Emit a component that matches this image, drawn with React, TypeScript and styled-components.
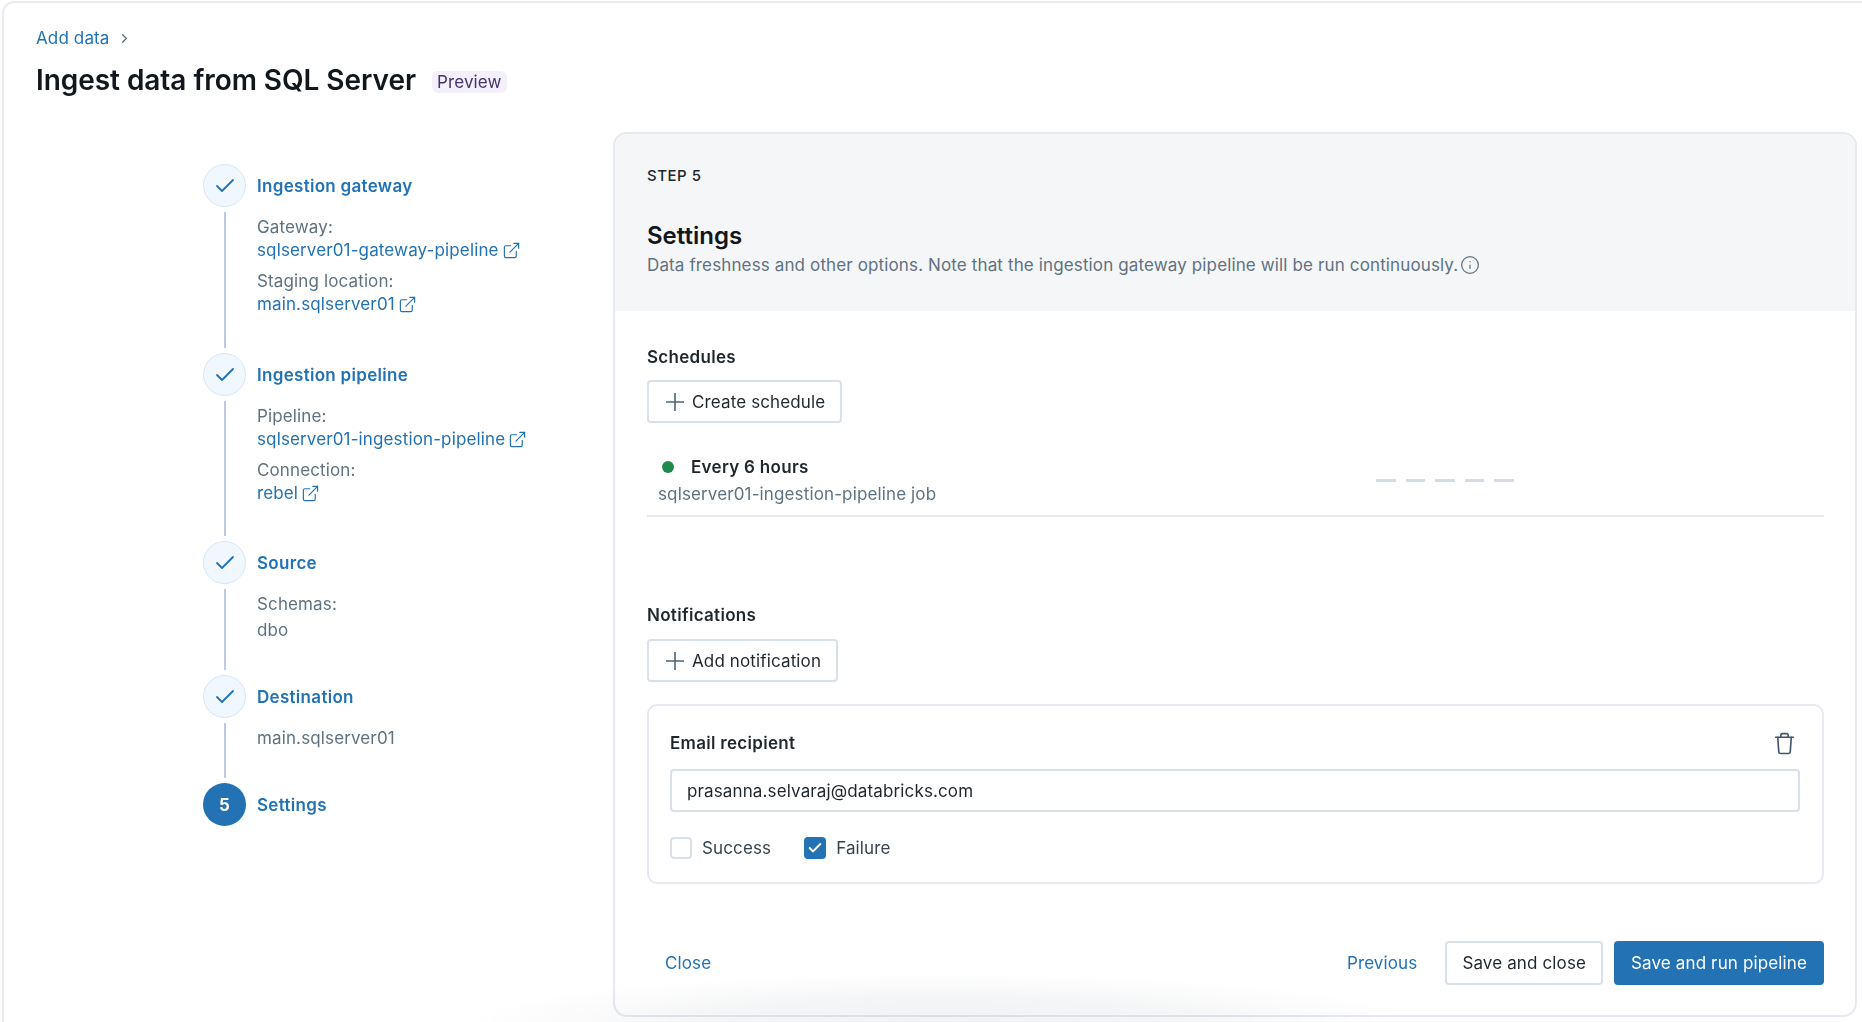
import React from 'react';
import styled, { createGlobalStyle, css } from 'styled-components';
import { Check, ChevronRight, ExternalLink, Info } from 'lucide-react';

const Global = createGlobalStyle`
  html, body { margin: 0; padding: 0; background: #fff; }
  * { box-sizing: border-box; }
  body { font-family: Inter, "Liberation Sans", sans-serif; color: #1f272d; -webkit-font-smoothing: antialiased; }
`;

const BLUE = '#2272b4';
const DIM = '#5f7281';

const bodyText = css`
  font-size: 17px;
  letter-spacing: 0.13px;
`;
const strongText = css`
  font-size: 17px;
  font-weight: 600;
  letter-spacing: 0.3px;
`;

const Frame = styled.div`
  position: relative;
  width: 1860px;
  height: 1021px;
  margin: 1px 0 0 2px;
  border: 2px solid #e8ecf0;
  border-width: 2px 0 0 2px;
  border-radius: 12px 0 0 0;
  overflow: hidden;
  background: #fff;
  filter: blur(0.6px);
`;
const Header = styled.header`
  height: 129px;
  padding: 23px 0 0 32px;
`;
const Crumb = styled.nav`
  display: flex;
  align-items: center;
  gap: 7px;
  height: 24px;
  ${bodyText};
  color: ${BLUE};
  svg { color: ${DIM}; }
`;
const TitleRow = styled.div`
  display: flex;
  align-items: center;
  gap: 16px;
  height: 36px;
  margin-top: 12px;
`;
const Title = styled.h1`
  margin: 0;
  font-size: 28px;
  font-weight: 600;
  line-height: 36px;
  letter-spacing: -0.05px;
  color: #11171c;
`;
const Badge = styled.span`
  display: inline-flex;
  align-items: center;
  height: 22px;
  margin-top: 4px;
  padding: 0 5px;
  border-radius: 6px;
  background: #f4f0fb;
  color: #44336f;
  ${bodyText};
`;
const Body = styled.main`
  display: flex;
`;
const Stepper = styled.ol`
  flex: 0 0 609px;
  margin: 0;
  padding: 32px 0 0 199px;
  list-style: none;
`;
const Step = styled.li<{ $h?: number }>`
  display: flex;
  gap: 11px;
  height: ${p => (p.$h ? `${p.$h}px` : 'auto')};
`;
const Rail = styled.div`
  display: flex;
  flex-direction: column;
  align-items: center;
  width: 43px;
`;
const Circle = styled.div<{ $active?: boolean }>`
  display: flex;
  align-items: center;
  justify-content: center;
  flex: none;
  width: 43px;
  height: 43px;
  border-radius: 50%;
  border: ${p => (p.$active ? 'none' : '1.5px solid #d7e6f5')};
  background: ${p => (p.$active ? BLUE : '#f1f7fe')};
  color: ${p => (p.$active ? '#fff' : BLUE)};
  font-size: 17px;
  font-weight: 700;
`;
const RailLine = styled.div`
  flex: 1;
  width: 2px;
  margin: 5px 0;
  background: #bccae2;
`;
const StepText = styled.div`
  min-width: 0;
`;
const StepTitle = styled.div`
  display: flex;
  align-items: center;
  height: 43px;
  padding-top: 1px;
  ${strongText};
  color: ${BLUE};
`;
const Details = styled.div`
  margin-top: 8.5px;
  display: flex;
  flex-direction: column;
`;
const DetailLabel = styled.div<{ $gap?: number }>`
  height: 23.5px;
  line-height: 23.5px;
  margin-top: ${p => p.$gap ?? 0}px;
  ${bodyText};
  color: ${DIM};
  white-space: nowrap;
`;
const DetailLink = styled.a`
  display: flex;
  align-items: center;
  gap: 3px;
  height: 23.5px;
  line-height: 23.5px;
  ${bodyText};
  color: ${BLUE};
  white-space: nowrap;
`;
const Panel = styled.section`
  flex: 1;
  height: 885px;
  margin-right: 5px;
  border: 2px solid #e6e9ef;
  border-radius: 14px;
  overflow: hidden;
  background: #fff;
`;
const PanelHead = styled.div`
  height: 177px;
  padding: 32px 32px 0;
  background: #f5f6f8;
`;
const StepLabel = styled.div`
  font-size: 15px;
  font-weight: 500;
  line-height: 20px;
  letter-spacing: 0.5px;
  color: #1f272d;
`;
const PanelTitle = styled.h2`
  margin: 34px 0 0;
  font-size: 24px;
  font-weight: 600;
  line-height: 32px;
  color: #11171c;
`;
const PanelDesc = styled.p`
  display: flex;
  align-items: center;
  gap: 2px;
  margin: 2px 0 0;
  ${bodyText};
  line-height: 22px;
  color: ${DIM};
`;
const PanelBody = styled.div`
  padding: 35px 31px 0 32px;
`;
const SectionTitle = styled.h3<{ $top?: number }>`
  margin: ${p => p.$top ?? 0}px 0 0;
  ${strongText};
  line-height: 22px;
  color: #1f272d;
`;
const GhostButton = styled.button<{ $top: number }>`
  display: flex;
  align-items: center;
  gap: 8px;
  height: 43px;
  margin-top: ${p => p.$top}px;
  padding: 0 15px 0 17px;
  border: 2px solid #d9e0ea;
  border-radius: 4px;
  background: #fff;
  font: inherit;
  ${bodyText};
  color: #1f272d;
  svg { color: #4d6478; }
`;
const ScheduleRow = styled.div`
  display: flex;
  align-items: center;
  margin-top: 33px;
  padding: 0 0 10px 11px;
  border-bottom: 2px solid #e4e8ee;
`;
const ScheduleInfo = styled.div`
  flex: 0 0 718px;
`;
const ScheduleName = styled.div`
  display: flex;
  align-items: center;
  gap: 17px;
  padding-left: 4px;
  ${strongText};
  line-height: 22px;
  color: #1f272d;
`;
const Dot = styled.span`
  width: 12px;
  height: 12px;
  border-radius: 50%;
  background: #1f8a4c;
`;
const ScheduleSub = styled.div`
  margin-top: 5px;
  ${bodyText};
  line-height: 22px;
  color: ${DIM};
`;
const Dashes = styled.div`
  display: flex;
  gap: 10px;
`;
const Dash = styled.span`
  width: 19.5px;
  height: 2.5px;
  background: #d5dce6;
`;
const Card = styled.div`
  height: 180px;
  margin-top: 22px;
  padding: 26px 22px 0 21px;
  border: 2px solid #e6eaf0;
  border-radius: 10px;
`;
const CardHead = styled.div`
  display: flex;
  align-items: center;
  justify-content: space-between;
  padding-right: 3px;
  height: 22px;
  ${strongText};
  color: #1f272d;
  svg { color: #44576a; }
`;
const EmailInput = styled.div`
  display: flex;
  align-items: center;
  height: 43px;
  margin-top: 15px;
  padding: 0 15px;
  border: 2px solid #d9e0ea;
  border-radius: 4px;
  ${bodyText};
  color: #1f272d;
`;
const Checks = styled.div`
  display: flex;
  align-items: center;
  gap: 33px;
  margin-top: 25px;
`;
const CheckItem = styled.label`
  display: flex;
  align-items: center;
  gap: 10px;
  ${bodyText};
  color: #37444f;
`;
const Box = styled.span<{ $on?: boolean }>`
  display: flex;
  align-items: center;
  justify-content: center;
  width: 22px;
  height: 22px;
  border: ${p => (p.$on ? 'none' : '2px solid #d9e0ea')};
  border-radius: 4px;
  background: ${p => (p.$on ? BLUE : '#fff')};
  color: #fff;
`;
const Footer = styled.div`
  display: flex;
  align-items: center;
  justify-content: space-between;
  margin-top: 57px;
  padding-left: 18px;
`;
const TextLink = styled.a`
  ${bodyText};
  color: ${BLUE};
`;
const Actions = styled.div`
  display: flex;
  align-items: center;
  gap: 11px;
  ${TextLink} { margin-right: 17px; }
`;
const ActionButton = styled.button<{ $primary?: boolean }>`
  height: 44px;
  padding: 0 15px;
  border: 2px solid ${p => (p.$primary ? BLUE : '#d9e0ea')};
  border-radius: 4px;
  background: ${p => (p.$primary ? BLUE : '#fff')};
  color: ${p => (p.$primary ? '#fff' : '#1f272d')};
  font: inherit;
  ${bodyText};
`;
const BottomGlow = styled.div`
  position: absolute;
  left: 470px;
  right: 450px;
  bottom: 0;
  height: 50px;
  background: radial-gradient(ellipse 470px 48px at 50% 100%, rgba(120, 130, 145, 0.1) 0%, rgba(120, 130, 145, 0.08) 50%, rgba(120, 130, 145, 0) 100%);
  pointer-events: none;
`;

const PlusIcon = () => (
  <svg width="18" height="18" viewBox="0 0 18 18" fill="none" stroke="currentColor" strokeWidth="1.6" aria-hidden="true">
    <path d="M9 0v18M0 9h18" />
  </svg>
);

const TrashIcon = () => (
  <svg width="25" height="25" viewBox="0 0 24 24" fill="none" stroke="currentColor" strokeWidth="1.6" strokeLinecap="round" strokeLinejoin="round" aria-hidden="true">
    <path d="M3.5 6h17" />
    <path d="M8.5 6V4a1.5 1.5 0 0 1 1.5-1.5h4A1.5 1.5 0 0 1 15.500 4v2" />
    <path d="M5.500 6l1 14a1.800 1.800 0 0 0 1.800 1.600h7.400a1.800 1.800 0 0 0 1.800-1.600l1-14" />
  </svg>
);

const Link = ({ children }: { children: React.ReactNode }) => (
  <DetailLink>
    {children}
    <ExternalLink size={19} strokeWidth={1.5} />
  </DetailLink>
);

const Done = () => (
  <Circle>
    <Check size={24} strokeWidth={1.8} />
  </Circle>
);

export default function App() {
  return (
    <>
      <Global />
      <Frame>
        <Header>
          <Crumb>
            Add data
            <ChevronRight size={15} strokeWidth={2} />
          </Crumb>
          <TitleRow>
            <Title>Ingest data from SQL Server</Title>
            <Badge>Preview</Badge>
          </TitleRow>
        </Header>
        <Body>
          <Stepper>
            <Step $h={189}>
              <Rail>
                <Done />
                <RailLine />
              </Rail>
              <StepText>
                <StepTitle>Ingestion gateway</StepTitle>
                <Details>
                  <DetailLabel>Gateway:</DetailLabel>
                  <Link>sqlserver01-gateway-pipeline</Link>
                  <DetailLabel $gap={7}>Staging location:</DetailLabel>
                  <Link>main.sqlserver01</Link>
                </Details>
              </StepText>
            </Step>
            <Step $h={188}>
              <Rail>
                <Done />
                <RailLine />
              </Rail>
              <StepText>
                <StepTitle>Ingestion pipeline</StepTitle>
                <Details>
                  <DetailLabel>Pipeline:</DetailLabel>
                  <Link>sqlserver01-ingestion-pipeline</Link>
                  <DetailLabel $gap={7}>Connection:</DetailLabel>
                  <Link>rebel</Link>
                </Details>
              </StepText>
            </Step>
            <Step $h={134}>
              <Rail>
                <Done />
                <RailLine />
              </Rail>
              <StepText>
                <StepTitle>Source</StepTitle>
                <Details>
                  <DetailLabel>Schemas:</DetailLabel>
                  <DetailLabel $gap={3}>dbo</DetailLabel>
                </Details>
              </StepText>
            </Step>
            <Step $h={108}>
              <Rail>
                <Done />
                <RailLine />
              </Rail>
              <StepText>
                <StepTitle>Destination</StepTitle>
                <Details>
                  <DetailLabel>main.sqlserver01</DetailLabel>
                </Details>
              </StepText>
            </Step>
            <Step>
              <Rail>
                <Circle $active>5</Circle>
              </Rail>
              <StepText>
                <StepTitle>Settings</StepTitle>
              </StepText>
            </Step>
          </Stepper>
          <Panel>
            <PanelHead>
              <StepLabel>STEP 5</StepLabel>
              <PanelTitle>Settings</PanelTitle>
              <PanelDesc>
                Data freshness and other options. Note that the ingestion gateway pipeline will be run continuously.
                <Info size={20} strokeWidth={1.5} />
              </PanelDesc>
            </PanelHead>
            <PanelBody>
              <SectionTitle>Schedules</SectionTitle>
              <GhostButton $top={12}>
                <PlusIcon />
                Create schedule
              </GhostButton>
              <ScheduleRow>
                <ScheduleInfo>
                  <ScheduleName>
                    <Dot />
                    Every 6 hours
                  </ScheduleName>
                  <ScheduleSub>sqlserver01-ingestion-pipeline job</ScheduleSub>
                </ScheduleInfo>
                <Dashes>
                  <Dash />
                  <Dash />
                  <Dash />
                  <Dash />
                  <Dash />
                </Dashes>
              </ScheduleRow>
              <SectionTitle $top={87}>Notifications</SectionTitle>
              <GhostButton $top={13}>
                <PlusIcon />
                Add notification
              </GhostButton>
              <Card>
                <CardHead>
                  Email recipient
                  <TrashIcon />
                </CardHead>
                <EmailInput>prasanna.selvaraj@databricks.com</EmailInput>
                <Checks>
                  <CheckItem>
                    <Box />
                    Success
                  </CheckItem>
                  <CheckItem>
                    <Box $on>
                      <Check size={16} strokeWidth={3} />
                    </Box>
                    Failure
                  </CheckItem>
                </Checks>
              </Card>
              <Footer>
                <TextLink>Close</TextLink>
                <Actions>
                  <TextLink>Previous</TextLink>
                  <ActionButton>Save and close</ActionButton>
                  <ActionButton $primary>Save and run pipeline</ActionButton>
                </Actions>
              </Footer>
            </PanelBody>
          </Panel>
        </Body>
        <BottomGlow />
      </Frame>
    </>
  );
}
